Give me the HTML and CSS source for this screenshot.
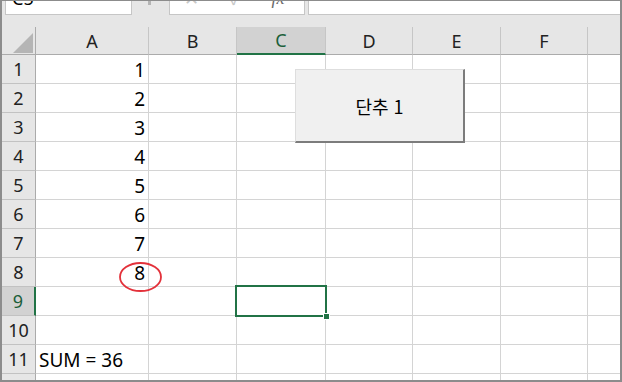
FILE: index.html
```html
<!DOCTYPE html>
<html lang="ko">
<head>
<meta charset="utf-8">
<title>Sheet</title>
<link rel="stylesheet" href="styles.css">
</head>
<body>
<div class="frame">
  <div class="fbar">
    <div class="namebox"><span class="nb-text">C5</span></div>
    <div class="grip"></div>
    <div class="fxbox">
      <span class="fx-x">✕</span>
      <span class="fx-ok">✓</span>
      <span class="fx-fx">fx</span>
    </div>
    <div class="finput"></div>
  </div>
  <div class="sheet">
    <div class="corner"><div class="tri"></div></div>
    <div class="ch">A</div><div class="ch">B</div><div class="ch sel">C</div><div class="ch">D</div><div class="ch">E</div><div class="ch">F</div><div class="ch last"></div>

    <div class="rh">1</div><div class="c num">1</div><div class="c"></div><div class="c"></div><div class="c"></div><div class="c"></div><div class="c"></div><div class="c last"></div>
    <div class="rh">2</div><div class="c num">2</div><div class="c"></div><div class="c"></div><div class="c"></div><div class="c"></div><div class="c"></div><div class="c last"></div>
    <div class="rh">3</div><div class="c num">3</div><div class="c"></div><div class="c"></div><div class="c"></div><div class="c"></div><div class="c"></div><div class="c last"></div>
    <div class="rh">4</div><div class="c num">4</div><div class="c"></div><div class="c"></div><div class="c"></div><div class="c"></div><div class="c"></div><div class="c last"></div>
    <div class="rh">5</div><div class="c num">5</div><div class="c"></div><div class="c"></div><div class="c"></div><div class="c"></div><div class="c"></div><div class="c last"></div>
    <div class="rh">6</div><div class="c num">6</div><div class="c"></div><div class="c"></div><div class="c"></div><div class="c"></div><div class="c"></div><div class="c last"></div>
    <div class="rh">7</div><div class="c num">7</div><div class="c"></div><div class="c"></div><div class="c"></div><div class="c"></div><div class="c"></div><div class="c last"></div>
    <div class="rh">8</div><div class="c num">8</div><div class="c"></div><div class="c"></div><div class="c"></div><div class="c"></div><div class="c"></div><div class="c last"></div>
    <div class="rh sel">9</div><div class="c"></div><div class="c"></div><div class="c"></div><div class="c"></div><div class="c"></div><div class="c"></div><div class="c last"></div>
    <div class="rh">10</div><div class="c"></div><div class="c"></div><div class="c"></div><div class="c"></div><div class="c"></div><div class="c"></div><div class="c last"></div>
    <div class="rh">11</div><div class="c txt">SUM = 36</div><div class="c"></div><div class="c"></div><div class="c"></div><div class="c"></div><div class="c"></div><div class="c last"></div>
    <div class="rh"></div><div class="c"></div><div class="c"></div><div class="c"></div><div class="c"></div><div class="c"></div><div class="c"></div><div class="c last"></div>
  </div>

  <div class="button">단추 1</div>
  <svg class="mark" width="44" height="31" viewBox="0 0 44 31">
    <ellipse cx="21.5" cy="15" rx="20.5" ry="14" fill="none" stroke="#e3313a" stroke-width="1.8"/>
  </svg>
  <div class="selection"><div class="handle"></div></div>
</div>
</body>
</html>
```

FILE: styles.css
```css
* {
  box-sizing: border-box;
  margin: 0;
  padding: 0;
}

html, body {
  width: 622px;
  height: 382px;
  overflow: hidden;
  background: #ffffff;
}

body {
  font-family: "Noto Sans", "Noto Sans CJK KR", sans-serif;
  color: #000;
}

.frame {
  position: relative;
  width: 622px;
  height: 382px;
  border: 2px solid #8c8c8c;
  border-top-width: 1px;
  background: #e6e6e6;
  overflow: hidden;
  display: flex;
  flex-direction: column;
}

/* formula bar */
.fbar {
  flex: none;
  height: 26px;
  display: flex;
  align-items: flex-start;
}

.namebox {
  margin-left: 3px;
  width: 127px;
  height: 14px;
  background: #fff;
  border: 1px solid #c6c6c6;
  border-top: none;
  overflow: hidden;
}

.nb-text {
  display: block;
  font-size: 18px;
  line-height: 20px;
  margin-top: -13px;
  padding-left: 6px;
}

.grip {
  margin-left: 16px;
  width: 3px;
  height: 4px;
  background: #b4b4b4;
}

.fxbox {
  margin-left: 18px;
  width: 136px;
  height: 14px;
  background: #fff;
  border: 1px solid #c6c6c6;
  border-top: none;
  overflow: hidden;
  display: flex;
  align-items: flex-start;
}

.fxbox span {
  display: block;
  font-size: 18px;
  line-height: 20px;
  margin-top: -13px;
  text-align: center;
}

.fx-x {
  margin-left: 13px;
  width: 16px;
  color: #c8c8c8;
}

.fx-ok {
  margin-left: 30px;
  width: 14px;
  color: #c8c8c8;
}

.fx-fx {
  margin-left: 27px;
  width: 16px;
  color: #6a6a6a;
  font-family: "Liberation Serif", serif;
  font-style: italic;
}

.finput {
  margin-left: 3px;
  flex: 1;
  height: 14px;
  background: #fff;
  border-left: 1px solid #c6c6c6;
  border-bottom: 1px solid #c6c6c6;
}

/* sheet grid */
.sheet {
  flex: none;
  display: grid;
  grid-template-columns: 34px 113px 88px 89px 87px 88px 87px 1fr;
  grid-template-rows: 28px repeat(12, 29px);
}

.corner {
  background: #e6e6e6;
  border-right: 1px solid #ababab;
  border-bottom: 1px solid #ababab;
  display: flex;
  justify-content: flex-end;
  align-items: flex-end;
  padding: 0 2px 1px 0;
}

.tri {
  width: 20px;
  height: 20px;
  background: #b5b5b5;
  clip-path: polygon(100% 0, 100% 100%, 0 100%);
}

.ch {
  background: #e6e6e6;
  border-right: 1px solid #c6c6c6;
  border-bottom: 1px solid #ababab;
  font-size: 18px;
  display: flex;
  align-items: center;
  justify-content: center;
  color: #222;
}

.ch.sel {
  background: #d2d2d2;
  border-bottom: 2px solid #217346;
  color: #1c5f3a;
}

.ch.last {
  border-right: none;
}

.rh {
  background: #e6e6e6;
  border-right: 1px solid #ababab;
  border-bottom: 1px solid #c2c2c2;
  font-size: 18px;
  display: flex;
  align-items: center;
  justify-content: center;
  color: #222;
}

.rh.sel {
  background: #d2d2d2;
  border-right: 2px solid #217346;
  color: #1c5f3a;
}

.c {
  background: #fff;
  border-right: 1px solid #d4d4d4;
  border-bottom: 1px solid #d4d4d4;
  font-size: 19px;
  display: flex;
  align-items: center;
  padding-top: 2px;
  white-space: nowrap;
}

.c.last {
  border-right: none;
}

.c.num {
  justify-content: flex-end;
  padding-right: 3px;
}

.c.txt {
  padding-left: 3px;
}

/* overlays */
.button {
  position: absolute;
  left: 293px;
  top: 68px;
  width: 170px;
  height: 74px;
  background: #f0f0f0;
  border-top: 1px solid #dedede;
  border-left: 1px solid #dedede;
  border-right: 2px solid #7c7c7c;
  border-bottom: 2px solid #7c7c7c;
  font-family: "Noto Sans CJK KR", "Noto Sans", sans-serif;
  font-size: 18px;
  display: flex;
  align-items: center;
  justify-content: center;
  color: #000;
}

.mark {
  position: absolute;
  left: 117px;
  top: 261px;
}

.selection {
  position: absolute;
  left: 233px;
  top: 284px;
  width: 92px;
  height: 32px;
  border: 2px solid #217346;
}

.handle {
  position: absolute;
  right: -5px;
  bottom: -5px;
  width: 7px;
  height: 7px;
  background: #217346;
  border: 1px solid #fff;
}
```
